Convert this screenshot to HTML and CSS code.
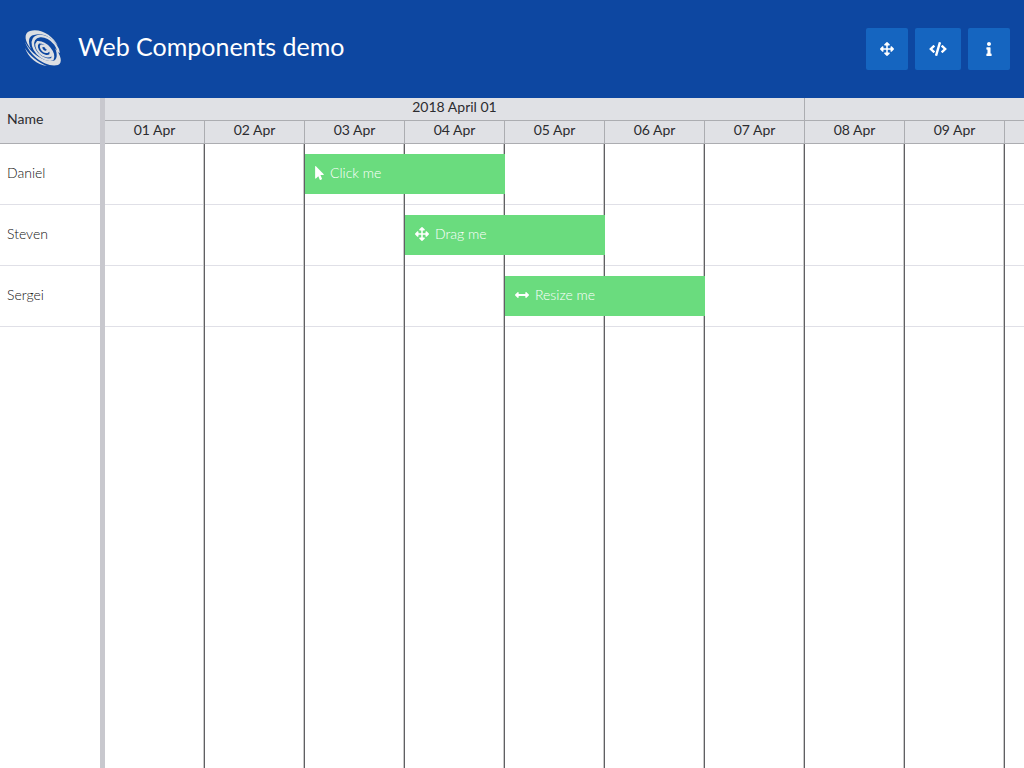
FILE: index.html
```html
<!DOCTYPE html>
<html lang="en">
<head>
<meta charset="utf-8">
<meta name="viewport" content="width=device-width, initial-scale=1">
<title>Web Components demo</title>
<link rel="stylesheet" href="styles.css">
</head>
<body>
<svg class="sprite" aria-hidden="true">
  <symbol id="move" viewBox="0 0 512 512"><path d="M352.201 425.775l-79.196 79.196c-9.373 9.373-24.568 9.373-33.941 0l-79.196-79.196c-15.119-15.119-4.411-40.971 16.971-40.97h51.162L228 284H127.196v51.162c0 21.382-25.851 32.09-40.971 16.971L7.029 272.937c-9.373-9.373-9.373-24.569 0-33.941L86.225 159.8c15.119-15.119 40.971-4.411 40.971 16.971V228H228V127.196h-51.23c-21.382 0-32.09-25.851-16.971-40.971l79.196-79.196c9.373-9.373 24.568-9.373 33.941 0l79.196 79.196c15.119 15.119 4.411 40.971-16.971 40.971h-51.162V228h100.804v-51.162c0-21.382 25.851-32.09 40.97-16.971l79.196 79.196c9.373 9.373 9.373 24.569 0 33.941L425.773 352.2c-15.119 15.119-40.971 4.411-40.97-16.971V284H284v100.804h51.23c21.382 0 32.09 25.851 16.971 40.971z"/></symbol>
  <symbol id="code" viewBox="0 0 640 512"><path d="M278.9 511.5l-61-17.7c-6.4-1.8-10-8.5-8.2-14.9L346.2 8.7c1.8-6.4 8.5-10 14.9-8.2l61 17.7c6.4 1.8 10 8.5 8.2 14.9L293.8 503.3c-1.9 6.4-8.5 10.1-14.9 8.2zm-114-112.2l43.5-46.4c4.6-4.9 4.3-12.7-.8-17.2L117 256l90.6-79.7c5.1-4.5 5.5-12.3.8-17.2l-43.5-46.4c-4.5-4.8-12.1-5.1-17-.5L3.8 247.2c-5.1 4.7-5.1 12.8 0 17.5l144.1 135.1c4.9 4.6 12.5 4.4 17-.5zm327.2.6l144.1-135.1c5.1-4.7 5.1-12.8 0-17.5L492.1 112.1c-4.8-4.5-12.4-4.3-17 .5L431.6 159c-4.6 4.9-4.3 12.7.8 17.2L523 256l-90.6 79.7c-5.1 4.5-5.5 12.3-.8 17.2l43.5 46.4c4.5 4.9 12.1 5.1 17 .6z"/></symbol>
  <symbol id="info" viewBox="0 0 192 512"><path d="M20 424.229h20V279.771H20c-11.046 0-20-8.954-20-20V212c0-11.046 8.954-20 20-20h112c11.046 0 20 8.954 20 20v212.229h20c11.046 0 20 8.954 20 20V492c0 11.046-8.954 20-20 20H20c-11.046 0-20-8.954-20-20v-47.771c0-11.046 8.954-20 20-20zM96 0C56.235 0 24 32.235 24 72s32.235 72 72 72 72-32.235 72-72S135.764 0 96 0z"/></symbol>
  <symbol id="pointer" viewBox="0 0 320 512"><path d="M302.189 329.126H196.105l55.831 135.993c3.889 9.428-.555 19.999-9.444 23.999l-49.165 21.427c-9.165 4-19.443-.571-23.332-9.714l-53.053-129.136-86.664 89.138C18.729 472.71 0 463.554 0 447.977V18.299C0 1.899 19.921-6.096 30.277 5.443l284.412 292.542c11.472 11.179 3.007 31.141-12.5 31.141z"/></symbol>
  <symbol id="resize" viewBox="0 0 512 512"><path d="M377.941 169.941V216H134.059v-46.059c0-21.382-25.851-32.09-40.971-16.971L7.029 239.029c-9.373 9.373-9.373 24.568 0 33.941l86.059 86.059c15.119 15.119 40.971 4.411 40.971-16.971V296h243.882v46.059c0 21.382 25.851 32.09 40.971 16.971l86.059-86.059c9.373-9.373 9.373-24.568 0-33.941l-86.059-86.059c-15.119-15.12-40.971-4.412-40.971 16.97z"/></symbol>
</svg>

<header class="topbar">
  <svg class="logo" viewBox="0 0 42 42" aria-hidden="true">
    <path d="M36 18C31 8 19 0 8 3C1 5 3 14 9 21C6 14 6 8 12 7C20 4 30 9 36 18Z"/>
    <path d="M3 14C9 26 22 34 31 33C35 32 36 27 33 20C39 27 41 35 36 37C24 40 8 28 3 14Z"/>
    <path d="M3 20C6 29 15 37 25 38C16 34 8 28 3 20Z"/>
    <g class="spiral" transform="translate(23 20) rotate(43) scale(1 .66)">
      <path d="M13 -9A15 15 0 0 0 -14 2A14 14 0 0 0 13 5A12 12 0 0 0 -9 1A9 9 0 0 0 9 2A7 7 0 0 0 -4 1A4 4 0 0 0 4 1A2 2 0 0 0 0 0"/>
    </g>
  </svg>
  <h1 class="title">Web Components demo</h1>
  <div class="tools">
    <button class="tool" type="button" aria-label="Fullscreen"><svg class="icon"><use href="#move"/></svg></button>
    <button class="tool" type="button" aria-label="Code"><svg class="icon icon-wide"><use href="#code"/></svg></button>
    <button class="tool" type="button" aria-label="Info"><svg class="icon"><use href="#info"/></svg></button>
  </div>
</header>

<main class="scheduler">
  <section class="names">
    <div class="head name-head">Name</div>
    <div class="row name">Daniel</div>
    <div class="row name">Steven</div>
    <div class="row name">Sergei</div>
  </section>
  <div class="splitter"></div>
  <section class="timeline">
    <div class="head dates">
      <div class="week">2018 April 01</div>
      <div class="week"></div>
      <div class="day">01 Apr</div>
      <div class="day">02 Apr</div>
      <div class="day">03 Apr</div>
      <div class="day">04 Apr</div>
      <div class="day">05 Apr</div>
      <div class="day">06 Apr</div>
      <div class="day">07 Apr</div>
      <div class="day">08 Apr</div>
      <div class="day">09 Apr</div>
      <div class="day"></div>
    </div>
    <div class="lanes">
      <div class="row lane"><div class="event from-3"><svg class="icon icon-narrow"><use href="#pointer"/></svg>Click me</div></div>
      <div class="row lane"><div class="event from-4"><svg class="icon"><use href="#move"/></svg>Drag me</div></div>
      <div class="row lane"><div class="event from-5"><svg class="icon"><use href="#resize"/></svg>Resize me</div></div>
    </div>
  </section>
</main>
</body>
</html>
```
FILE: styles.css
```css
* {
  box-sizing: border-box;
}

:root {
  --row-line: #e0e0e7;
  --columns: repeating-linear-gradient(to right, transparent 0 98px, #c8c8c8 98px 99px, #606063 99px 100px);
}

body {
  margin: 0;
  min-height: 100vh;
  display: flex;
  flex-direction: column;
  font: 300 14px/20px Lato, "Open Sans", sans-serif;
  color: #111;
  background: #fff;
}

.sprite {
  display: none;
}

.topbar {
  display: flex;
  align-items: center;
  padding: 28px 14px 28px 22px;
  background: #0d47a1;
  color: #fff;
}

.logo {
  width: 42px;
  height: 42px;
  fill: #dcdfe3;
}

.spiral {
  fill: none;
  stroke: #dcdfe3;
  stroke-width: 3;
}

.title {
  margin: 0 auto 0 14px;
  font-size: 25px;
  line-height: 36px;
  font-weight: 400;
  padding-bottom: 6px;
}

.tools {
  display: flex;
  gap: 7px;
}

.tool {
  min-width: 42px;
  height: 42px;
  padding: 0 14px;
  display: flex;
  align-items: center;
  justify-content: center;
  border: 0;
  border-radius: 2px;
  background: #1565c0;
  color: #fff;
}

.icon {
  width: 14px;
  height: 14px;
  fill: currentColor;
}

.icon-wide {
  width: 18px;
}

.icon-narrow {
  width: 9px;
}

.scheduler {
  flex: 1;
  display: flex;
}

.names {
  flex: 0 0 100px;
}

.splitter {
  flex: 0 0 5px;
  background: #c8c8ce;
}

.timeline {
  flex: 1;
  min-width: 0;
  overflow: hidden;
  display: flex;
  flex-direction: column;
}

.head {
  height: 46px;
  background: #e0e1e5;
  border-bottom: 1px solid #acadb1;
  font-weight: 400;
  line-height: 18px;
  color: #2c2c30;
}

.name-head {
  display: flex;
  align-items: center;
  padding: 0 7px 4px;
}

.dates {
  display: grid;
  grid-template-columns: repeat(10, 100px);
  grid-template-rows: 23px 22px;
  text-align: center;
}

.week,
.day {
  border-right: 1px solid #acadb1;
}

.week {
  grid-column: span 7;
  border-bottom: 1px solid #acadb1;
}

.week + .week {
  grid-column: span 3;
}

.row {
  height: 61px;
  border-bottom: 1px solid var(--row-line);
}

.name {
  display: flex;
  align-items: center;
  padding: 0 7px 2px;
}

.lanes {
  flex: 1;
  background: var(--columns);
}

.lane {
  display: grid;
  grid-template-columns: repeat(10, 100px);
  padding: 10px 0;
  border-color: transparent;
  background: var(--columns), linear-gradient(var(--row-line), var(--row-line)) bottom / 100% 1px no-repeat;
  background-origin: border-box;
}

.event {
  display: flex;
  align-items: center;
  gap: 6px;
  padding: 0 10px 2px;
  background: #6adc7e;
  color: #fff;
}

.from-3 {
  grid-column: 3 / span 2;
}

.from-4 {
  grid-column: 4 / span 2;
}

.from-5 {
  grid-column: 5 / span 2;
}
```
